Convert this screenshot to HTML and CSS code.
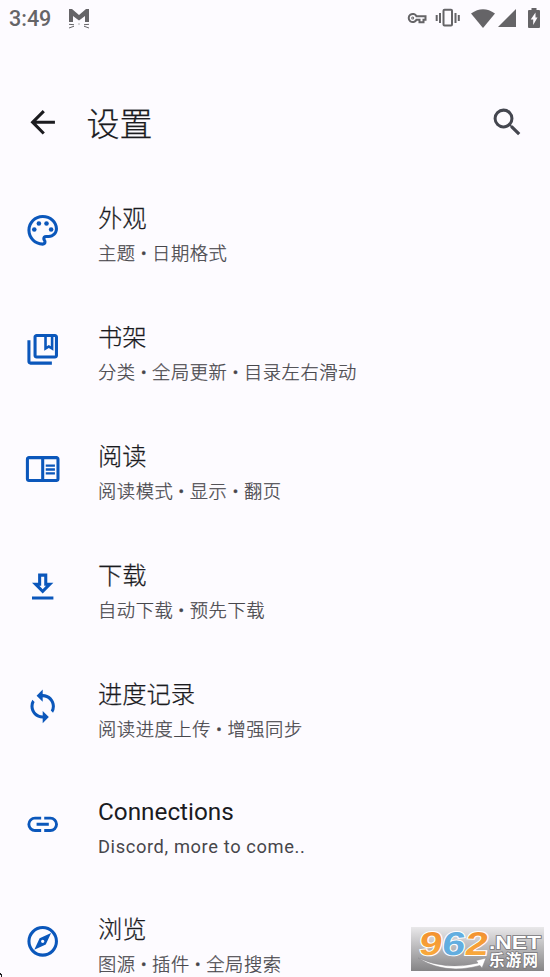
FILE: index.html
```html
<!DOCTYPE html>
<html lang="zh-CN">
<head>
<meta charset="utf-8">
<title>设置</title>
<link rel="stylesheet" href="styles.css">
</head>
<body>
<div class="screen">
  <header class="status">
    <span class="clock">3:49</span>
    <svg class="cat" viewBox="0 0 22 22"><path d="M1 14V1h3l7 6 7-6h3v13h-4V8l-6 4.5L5 8v6z"/><path class="whisker" d="M1 16.3l5 .4M1 20l5-1.8M21 16.3l-5 .4M21 20l-5-1.8M10.5 16h1"/></svg>
    <div class="indicators">
      <svg class="key" viewBox="0 0 20 14"><path d="M9.5 5.2A4.1 4.1 0 1 0 9.500 8.800H12.500V11.200H16.500V8.800H18.500V5.200z"/><circle cx="5.700" cy="7" r="0.500"/></svg>
      <svg class="vibrate" viewBox="0 0 26 20"><rect x="8.500" y="1.800" width="8.500" height="15.800" rx="1"/><path d="M5 5v10M1.700 7v6M20.500 5v10M23.800 7v6"/></svg>
      <svg class="wifi" viewBox="0 0 24 19"><path d="M0 4.500Q12-4 24 4.500L12 19z"/></svg>
      <svg class="signal" viewBox="0 0 18 18"><path d="M18 0v18H0z"/></svg>
      <svg class="battery" viewBox="0 0 12 20"><path fill-rule="evenodd" d="M3.500 0h5v2H11q1 0 1 1v16q0 1-1 1H1q-1 0-1-1V3q0-1 1-1h2.500zM7.500 4.500L2.700 11.500h2.500V17L9.500 9.500H7.500z"/></svg>
    </div>
  </header>

  <div class="appbar">
    <svg class="icon back" viewBox="0 0 24 24"><path d="M20 11H7.830l5.590-5.590L12 4l-8 8 8 8 1.410-1.410L7.830 13H20z"/></svg>
    <h1>设置</h1>
    <svg class="icon search" viewBox="0 0 24 24"><path d="M15.500 14h-.79l-.28-.27A6.470 6.470 0 0 0 16 9.500 6.500 6.500 0 1 0 9.500 16c1.610 0 3.090-.59 4.230-1.570l.27.28v.79l5 4.990L20.490 19l-4.990-5zm-6 0C7.010 14 5 11.990 5 9.500S7.010 5 9.500 5 14 7.010 14 9.500 11.990 14 9.500 14z"/></svg>
  </div>

  <main class="list">
    <div class="row">
      <svg class="icon" viewBox="0 0 24 24"><path d="M12 22C6.490 22 2 17.510 2 12S6.490 2 12 2s10 4.040 10 9c0 3.310-2.690 6-6 6h-1.770c-.28 0-.5.22-.5.5 0 .12.05.23.13.33.41.47.64 1.060.64 1.670A2.500 2.500 0 0 1 12 22zm0-18c-4.410 0-8 3.590-8 8s3.590 8 8 8c.28 0 .5-.22.5-.5a.54.54 0 0 0-.14-.35c-.41-.46-.63-1.050-.63-1.650a2.500 2.500 0 0 1 2.500-2.500H16c2.210 0 4-1.790 4-4 0-3.860-3.590-7-8-7z"/><circle cx="6.500" cy="11.500" r="1.500"/><circle cx="9.500" cy="7.500" r="1.500"/><circle cx="14.500" cy="7.500" r="1.500"/><circle cx="17.500" cy="11.500" r="1.500"/></svg>
      <div class="text"><h2>外观</h2><p>主题 • 日期格式</p></div>
    </div>
    <div class="row">
      <svg class="icon" viewBox="0 0 24 24"><path fill-rule="evenodd" d="M4 6H2v14c0 1.100.9 2 2 2h14v-2H4zM20 2H8c-1.100 0-2 .9-2 2v12c0 1.100.9 2 2 2h12c1.100 0 2-.9 2-2V4c0-1.100-.9-2-2-2zm0 14H8V4h5v9l3-1.800 3 1.800V4h1zM14.700 4h2.600v6l-1.300-.9-1.300.9z"/></svg>
      <div class="text"><h2>书架</h2><p>分类 • 全局更新 • 目录左右滑动</p></div>
    </div>
    <div class="row">
      <svg class="icon" viewBox="0 0 24 24"><path d="M21 4H3c-1.100 0-2 .9-2 2v13c0 1.100.9 2 2 2h18c1.100 0 2-.9 2-2V6c0-1.100-.9-2-2-2zM11 19H3V6h8zm10 0h-8V6h8zm-7-9.500h6V11h-6zm0 2.500h6v1.500h-6zm0 2.500h6V16h-6z"/></svg>
      <div class="text"><h2>阅读</h2><p>阅读模式 • 显示 • 翻页</p></div>
    </div>
    <div class="row">
      <svg class="icon" viewBox="0 0 24 24"><path d="M13 5v6h1.170L12 13.170 9.830 11H11V5h2m2-2H9v6H5l7 7 7-7h-4zm4 15H5v2h14z"/></svg>
      <div class="text"><h2>下载</h2><p>自动下载 • 预先下载</p></div>
    </div>
    <div class="row">
      <svg class="icon" viewBox="0 0 24 24"><path d="M12 4V1L8 5l4 4V6c3.310 0 6 2.690 6 6 0 1.010-.25 1.970-.7 2.800l1.460 1.460A7.930 7.930 0 0 0 20 12c0-4.420-3.580-8-8-8zm0 14c-3.310 0-6-2.690-6-6 0-1.010.25-1.970.7-2.800L5.240 7.740A7.930 7.930 0 0 0 4 12c0 4.420 3.580 8 8 8v3l4-4-4-4z"/></svg>
      <div class="text"><h2>进度记录</h2><p>阅读进度上传 • 增强同步</p></div>
    </div>
    <div class="row latin">
      <svg class="icon" viewBox="0 0 24 24"><path d="M3.900 12c0-1.710 1.390-3.100 3.100-3.100h4V7H7a5 5 0 0 0 0 10h4v-1.900H7c-1.710 0-3.100-1.390-3.100-3.100zM8 13h8v-2H8zm9-6h-4v1.900h4a3.100 3.100 0 0 1 0 6.200h-4V17h4a5 5 0 0 0 0-10z"/></svg>
      <div class="text"><h2>Connections</h2><p>Discord, more to come..</p></div>
    </div>
    <div class="row">
      <svg class="icon" viewBox="0 0 24 24"><path d="M12 2a10 10 0 1 0 0 20 10 10 0 0 0 0-20zm0 18a8 8 0 1 1 0-16 8 8 0 0 1 0 16zm-5.500-2.500 7.510-3.490L17.500 6.500 9.990 9.990zm5.500-6.600a1.100 1.100 0 1 1 0 2.200 1.100 1.100 0 0 1 0-2.200z"/></svg>
      <div class="text"><h2>浏览</h2><p>图源 • 插件 • 全局搜索</p></div>
    </div>
  </main>

  <svg class="watermark" viewBox="0 0 133 44">
    <defs>
      <linearGradient id="plate" x1="0" y1="0" x2="0" y2="1"><stop offset="0" stop-color="#e9e8ea"/><stop offset="1" stop-color="#858486"/></linearGradient>
      <linearGradient id="orange" x1="0" y1="0" x2="0" y2="1"><stop offset="0" stop-color="#f08a2c"/><stop offset="1" stop-color="#fbb040"/></linearGradient>
    </defs>
    <rect width="133" height="44" fill="url(#plate)"/>
    <g class="digits" transform="translate(0 27.500) skewX(-8)">
      <text x="7" y="0" textLength="23" lengthAdjust="spacingAndGlyphs" fill="url(#orange)">9</text>
      <text x="30" y="0" textLength="23" lengthAdjust="spacingAndGlyphs" fill="#62aee0">6</text>
      <text x="53" y="0" textLength="23" lengthAdjust="spacingAndGlyphs" fill="url(#orange)">2</text>
    </g>
    <text class="net" x="78" y="21.500" textLength="52" lengthAdjust="spacingAndGlyphs">.NET</text>
    <path class="swoosh" d="M7 31Q36 44 67 36L65 33.500 75 31 71 41 69 38.500Q34 48 7 31z"/>
    <text class="name" x="78" y="39" textLength="49">乐游网</text>
  </svg>
  <svg class="corner" viewBox="0 0 3 4"><path d="M0 0h1v1h1v3H1V2H0z"/></svg>
</div>
</body>
</html>
```
FILE: styles.css
```css
* { box-sizing: border-box; }
body { margin: 0; background: #fdfbff; }
.screen {
  position: relative;
  width: 550px;
  height: 977px;
  overflow: hidden;
  background: #fdfbff;
  color: #1b1b1f;
  font-family: Roboto, "Noto Sans CJK SC", sans-serif;
}
h1, h2, p { margin: 0; font-weight: 300; -webkit-text-stroke: 0.25px currentColor; }
svg { display: block; flex: none; }

.status {
  display: flex;
  align-items: center;
  height: 38px;
  padding: 0 10px 0 9px;
  color: #656467;
  fill: #656467;
}
.clock { width: 59px; font-size: 21.5px; font-weight: 500; line-height: 38px; }
.cat { width: 22px; height: 22px; }
.whisker { fill: none; stroke: #656467; stroke-width: 1; }
.indicators { display: flex; align-items: center; margin: -2px 0 0 auto; }
.key { width: 20px; height: 14px; margin-right: 8px; fill: none; stroke: #656467; stroke-width: 2; }
.vibrate { width: 26px; height: 20px; margin-right: 10px; fill: none; stroke: #656467; stroke-width: 2; }
.wifi { width: 24px; height: 19px; margin-right: 3px; }
.signal { width: 18px; height: 18px; margin-right: 12px; }
.battery { width: 12px; height: 20px; }

.appbar {
  display: flex;
  align-items: center;
  height: 98px;
  margin-top: 35px;
  padding: 0 24px;
}
.icon { width: 37.4px; height: 36.7px; fill: #0b57bb; }
.icon.back { fill: #1b1b1f; }
.icon.search { width: 36.700px; margin-left: auto; fill: #44464f; }
h1 { margin: 6px 0 0 25px; font-size: 33px; line-height: 48px; }

.row {
  display: flex;
  align-items: center;
  height: 119px;
  padding-left: 24px;
}
.row.latin { height: 116.300px; }
.text { margin-left: 36.600px; padding-top: 10px; }
.latin .text { padding-top: 8px; }
h2 { font-size: 24.300px; line-height: 36px; }
p {
  color: #47464b;
  font-size: 18.300px;
  line-height: 33px;
  letter-spacing: 0.550px;
  white-space: nowrap;
}
.latin h2, .latin p { font-weight: 400; -webkit-text-stroke: 0; }
.latin p { letter-spacing: 0.620px; }

.watermark { position: absolute; left: 411px; top: 927px; width: 133px; height: 44px; }
.digits text {
  font: 700 33px "Liberation Sans", sans-serif;
  stroke: #fff;
  stroke-width: 2;
  paint-order: stroke;
}
.net, .name {
  fill: #fff;
  stroke: #77767a;
  stroke-width: 1.500;
  paint-order: stroke;
}
.net { font: 700 18px "Liberation Sans", sans-serif; }
.name { font: 700 15.500px "Noto Sans CJK SC", sans-serif; }
.swoosh { fill: #fff; stroke: #8a898c; stroke-width: 0.500; }
.corner { position: absolute; left: 0; top: 973px; width: 3px; height: 4px; fill: #1b1b1f; }
```
